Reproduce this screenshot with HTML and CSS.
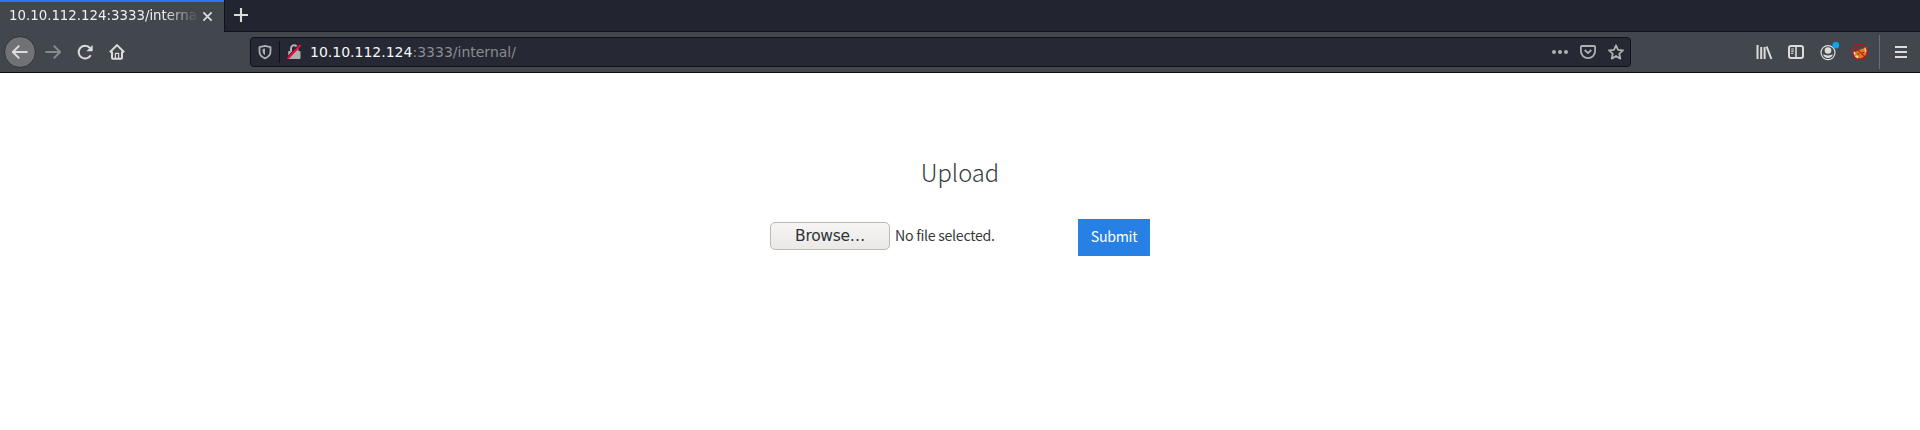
FILE: index.html
```html
<!DOCTYPE html>
<html lang="en">
<head>
<meta charset="utf-8">
<title>Upload</title>
<link rel="stylesheet" href="styles.css">
</head>
<body>
<header class="browser">
  <div class="tabs">
    <div class="tab">
      <span class="tab-title">10.10.112.124:3333/internal/</span>
      <svg class="tab-close" viewBox="0 0 12 12"><path d="M1.5 1.5l9 9M10.5 1.5l-9 9"/></svg>
    </div>
    <div class="new-tab"><svg viewBox="0 0 16 16"><path d="M8 1v14M1 8h14"/></svg></div>
  </div>
  <div class="toolbar">
    <div class="nav">
      <span class="back"><svg class="icon" viewBox="0 0 16 16"><path d="M15.5 8H1M7.2 1.6L.9 8l6.3 6.4"/></svg></span>
      <span class="tool forward"><svg class="icon" viewBox="0 0 16 16"><path d="M.5 8H15M8.8 1.6L15.1 8l-6.3 6.4"/></svg></span>
      <span class="tool"><svg class="icon" viewBox="0 0 16 16"><path d="M13.7 11.2A6.4 6.4 0 1 1 13 4"/><path class="solid" d="M15.7 1v6.3H9.4z"/></svg></span>
      <span class="tool"><svg class="icon" viewBox="0 0 16 16"><path d="M.8 8.2L8 1.1l7.2 7.1M3 7.5v6.2q0 1 1 1h8q1 0 1-1V7.5"/><path class="thin" d="M6.4 14V9.3h3.2V14"/></svg></span>
    </div>
    <div class="urlbar">
      <svg class="icon shield" viewBox="0 0 16 16"><path d="M8 1.8l5.5 1.3v4.4c0 3.3-2.1 5.5-5.5 6.8-3.4-1.3-5.5-3.5-5.5-6.8V3.1z"/><path class="solid" d="M8 4.5v6.8C6.4 10 5.6 9 5.6 7V5.1z"/></svg>
      <span class="identity-line"></span>
      <svg class="icon lock" viewBox="0 0 16 16"><path d="M5 8V4.5a3.2 3.2 0 0 1 6.4 0V8"/><path class="solid" d="M3.2 7h10q1.3 0 1.3 1V14q0 1-1 1H3.2q-1 0-1-1V8q0-1 1-1z"/><path class="strike-gap" d="M1.6 13.4L13 1"/><path class="strike" d="M1.5 15L14.5 1"/></svg>
      <span class="url"><b>10.10.112.124</b>:3333/internal/</span>
      <span class="page-actions">
        <svg class="icon" viewBox="0 0 16 16"><g class="solid"><circle cx="2" cy="8" r="2"/><circle cx="8" cy="8" r="2"/><circle cx="14" cy="8" r="2"/></g></svg>
        <svg class="icon" viewBox="0 0 16 16"><path d="M2 2h12q1.1 0 1.1 1.1V7A7.1 7.1 0 0 1 .9 7V3.1Q.9 2 2 2z"/><path d="M4.7 6L8 9.2 11.3 6"/></svg>
        <svg class="icon" viewBox="0 0 16 16"><path d="M8 1.3l2 4.5 5 .6-3.7 3.3 1 4.9L8 12.1l-4.3 2.5 1-4.9L1 6.4l5-.6z"/></svg>
      </span>
    </div>
    <div class="extras">
      <svg class="icon" viewBox="0 0 16 16"><path d="M1.5 1v14M5.2 3v12M8.6 3v12M10.6 2.5L15.4 15"/></svg>
      <svg class="icon" viewBox="0 0 16 16"><rect x="1" y="2" width="14" height="12" rx="2"/><path class="mid" d="M8 2v12"/><path class="thin" d="M3.2 5h2.6M3.2 7.2h2.6M3.2 9.4h2"/></svg>
      <svg class="icon" viewBox="0 0 16 16"><circle class="thin" cx="8" cy="8.6" r="7"/><circle class="solid" cx="8" cy="6.5" r="3.3"/><path class="solid" d="M3 10.3c3 1.5 7 1.5 10 0-.7 2.4-2.6 3.8-5 3.8s-4.3-1.4-5-3.8z"/><circle class="alert" cx="15.8" cy="1.2" r="3.3"/></svg>
      <svg class="icon" viewBox="0 0 16 16"><path class="fox" d="M2.5 8.5l3-1.7L9 5l4.5-1 1.3 3-1.3 4.5-4 2.8-5 .3L2 12z"/><path class="fur" d="M12.2 3.6h2.6l.4 3.4-1.7 1.2zM1 8.2l1.8-.6.8 2.4-1.4 1zM2.5 12.2l2.5-1 1.5 1.5-.5 2-2.8-.8z"/><path class="ink" d="M5.6 9.4h1.5v1.2H5.6zM10.4 8h1.4v1.2h-1.4z"/><circle class="ban" cx="8" cy="8" r="7.3"/><path class="ban" d="M2.8 2.8l10.4 10.4"/></svg>
      <span class="divider"></span>
      <svg class="icon menu" viewBox="0 0 16 16"><path d="M2 3h12M2 8h12M2 13h12"/></svg>
    </div>
  </div>
</header>
<main class="page">
  <h1>Upload</h1>
  <form class="upload">
    <button class="browse" type="button">Browse…</button>
    <span class="file-name">No file selected.</span>
    <button class="submit" type="button">Submit</button>
  </form>
</main>
</body>
</html>
```
FILE: styles.css
```css
* { box-sizing: border-box; }
body { margin: 0; height: 430px; overflow: hidden; background: #fff; }
svg { fill: none; stroke: currentColor; flex: none; overflow: visible; }
.browser { height: 73px; background: #42464d; border-bottom: 1px solid #0c0c10; font-family: "DejaVu Sans", sans-serif; color: #dcdcda; }
.tabs { display: flex; height: 32px; background: #22252f; }
.tab { width: 224px; height: 32px; padding: 0 11px 2px 9px; display: flex; align-items: center; gap: 6px; background: #42464d; border-top: 2px solid #2a77f5; }
.tab-title { width: 187px; overflow: hidden; white-space: nowrap; font-size: 13.33px; line-height: 20px; color: #f0f0ef; mask-image: linear-gradient(to right, #000 155px, transparent 190px); }
.tab-close { width: 11px; height: 11px; stroke-width: 1.9; }
.new-tab { flex: 1; display: flex; align-items: center; padding: 0 0 2px 8px; border-left: 1px solid #111319; border-bottom: 1px solid #111319; }
.new-tab svg { width: 16px; height: 16px; stroke-width: 2.1; }
.toolbar { display: flex; align-items: center; height: 40px; padding-left: 4px; }
.icon { width: 16px; height: 16px; stroke-width: 2; stroke-linejoin: round; }
.solid { fill: currentColor; stroke: none; }
.thin { stroke-width: 1.2; }
.mid { stroke-width: 1.6; }
.nav { display: flex; align-items: center; width: 246px; }
.back { width: 32px; height: 32px; display: flex; align-items: center; justify-content: center; border: 1px solid #303238; border-radius: 50%; background: #717276; margin-right: 1px; }
.tool { width: 32px; display: flex; justify-content: center; }
.forward { color: #888a8e; }
.urlbar { display: flex; align-items: center; width: 1381px; height: 30px; padding: 0 6px; border: 1px solid #0f1118; border-radius: 4px; background: #262833; color: #b0b0b2; }
.identity-line { width: 1px; height: 22px; margin: 0 6px; background: #0e0f16; }
.shield { stroke-width: 1.8; }
.lock { stroke-width: 2; }
.strike-gap { stroke: #262833; stroke-width: 1.6; }
.strike { stroke: #f20c3c; stroke-width: 2; }
.url { flex: 1; margin-left: 8px; font-size: 14px; line-height: 20px; color: #8c8c91; white-space: nowrap; }
.url b { font-weight: normal; color: #f8f8f8; }
.page-actions { display: flex; gap: 12px; }
.page-actions .icon { stroke-width: 1.8; }
.extras { flex: 1; display: flex; align-items: center; gap: 16px; padding: 0 11px 0 125px; }
.divider { width: 1px; height: 34px; margin: 0 -3px 0 -5px; background: #6a6c72; }
.alert { fill: #08a7f1; stroke: none; }
.fox { fill: #e07a1c; stroke: none; }
.fur { fill: #f3dfbd; stroke: none; }
.ink { fill: #44301f; stroke: none; }
.ban { stroke: #cc1111; stroke-width: 1.2; }
.page { padding-top: 79px; font-family: "Noto Sans CJK JP", sans-serif; color: #373a3c; }
h1 { margin: 0; text-align: center; font-size: 23.7px; line-height: 40px; font-weight: 200; }
.upload { display: flex; align-items: center; width: 380px; margin: 27px auto 0; }
.browse { width: 120px; height: 28px; padding: 0 0 1px; border: 1px solid #bcb8b2; border-radius: 5px; background: linear-gradient(#f6f5f4, #eae9e7); font: 15.5px/20px "DejaVu Sans", sans-serif; letter-spacing: -0.3px; color: #2e3436; margin-bottom: 3px; }
.file-name { flex: 1; padding: 0 0 5px 5px; font-size: 14.2px; line-height: 22px; letter-spacing: -0.3px; }
.submit { width: 72px; height: 37px; padding: 0 0 3px; border: 0; background: #2780e3; color: #fff; font: 14.2px/22px "Noto Sans CJK JP", sans-serif; letter-spacing: -0.3px; }
```
